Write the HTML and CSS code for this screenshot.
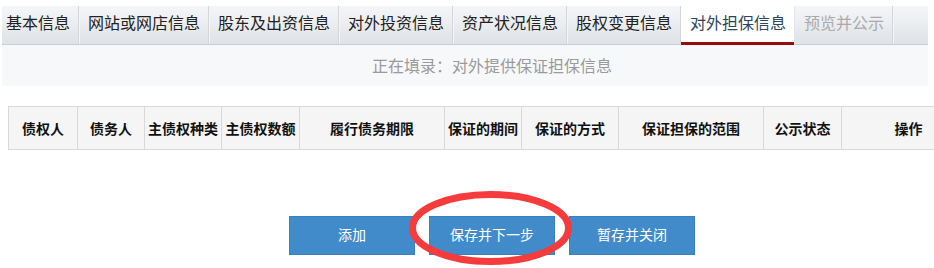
FILE: index.html
```html
<!DOCTYPE html>
<html lang="zh-CN">
<head>
<meta charset="utf-8">
<title>对外担保信息</title>
<link rel="stylesheet" href="styles.css">
</head>
<body>
<div class="page">
  <div class="tabs">
    <div class="tab first">基本信息</div>
    <div class="tab">网站或网店信息</div>
    <div class="tab">股东及出资信息</div>
    <div class="tab">对外投资信息</div>
    <div class="tab">资产状况信息</div>
    <div class="tab">股权变更信息</div>
    <div class="tab active">对外担保信息</div>
    <div class="tab disabled">预览并公示</div>
  </div>
  <div class="sub">正在填录：对外提供保证担保信息</div>
  <table class="grid">
    <colgroup>
      <col class="c1"><col class="c2"><col class="c3"><col class="c4"><col class="c5">
      <col class="c6"><col class="c7"><col class="c8"><col class="c9"><col class="c10">
    </colgroup>
    <thead>
      <tr>
        <th>债权人</th>
        <th>债务人</th>
        <th>主债权种类</th>
        <th>主债权数额</th>
        <th>履行债务期限</th>
        <th>保证的期间</th>
        <th>保证的方式</th>
        <th>保证担保的范围</th>
        <th>公示状态</th>
        <th>操作</th>
      </tr>
    </thead>
  </table>
  <div class="actions">
    <button class="btn">添加</button>
    <button class="btn">保存并下一步</button>
    <button class="btn">暂存并关闭</button>
  </div>
</div>
<svg class="mark" width="163" height="74" viewBox="0 0 163 74">
  <ellipse cx="81.5" cy="37" rx="78" ry="33.5" fill="none" stroke="#f53b3b" stroke-width="7"/>
</svg>
</body>
</html>
```
FILE: styles.css
```css
html, body {
  margin: 0;
  padding: 0;
  background: #fff;
  overflow: hidden;
}
body {
  position: relative;
  width: 934px;
  height: 268px;
  font-family: "Noto Sans CJK SC", "Noto Sans", sans-serif;
  color: #222;
}
.page {
  padding: 6px 0 0 2px;
  width: 926px;
}
.tabs {
  display: flex;
  height: 38px;
  background: linear-gradient(#f5f6f8, #dfe2e6);
  border-bottom: 1px solid #c6ced8;
}
.tab {
  height: 38px;
  line-height: 32px;
  padding: 0 8px 0 9px;
  font-size: 16px;
  color: #222;
  border-right: 1px solid #d3d7dc;
  box-shadow: 1px 0 0 #f4f5f7;
  white-space: nowrap;
}
.tab.first {
  padding-left: 4px;
}
.tab.active {
  background: #fff;
  color: #2c4560;
  height: 39px;
  margin-bottom: -1px;
  box-shadow: inset 0 -3px 0 #9a0a0a;
  border-right: 1px solid #e2e5e9;
  box-sizing: border-box;
}
.tab.disabled {
  color: #aaa;
}
.sub {
  height: 41px;
  line-height: 41px;
  background: #f7f8fa;
  text-align: center;
  padding-left: 54px;
  font-size: 16px;
  color: #9a9a9a;
}
.grid {
  margin: 20px 0 0 6px;
  border-collapse: collapse;
  table-layout: fixed;
  width: 967px;
}
.grid th {
  height: 42px;
  padding: 0;
  background: #f5f5f5;
  border: 1px solid #d9d9d9;
  font-size: 14px;
  font-weight: bold;
  color: #111;
  text-align: center;
  white-space: nowrap;
  line-height: 20px;
}
.c1 { width: 69px; }
.c2 { width: 67px; }
.c3 { width: 77px; }
.c4 { width: 78px; }
.c5 { width: 145px; }
.c6 { width: 77px; }
.c7 { width: 97px; }
.c8 { width: 145px; }
.c9 { width: 78px; }
.c10 { width: 134px; }
.actions {
  display: flex;
  justify-content: center;
  gap: 14px;
  margin-top: 66px;
  padding-left: 54px;
}
.btn {
  width: 126px;
  height: 39px;
  background: #428bca;
  border: 1px solid #3a7fbe;
  color: #fff;
  font-family: "Noto Sans CJK SC", "Noto Sans", sans-serif;
  font-size: 14px;
  line-height: 20px;
  padding: 0 0 4px 0;
  margin: 0;
}
.mark {
  position: absolute;
  left: 409px;
  top: 191px;
}
```
